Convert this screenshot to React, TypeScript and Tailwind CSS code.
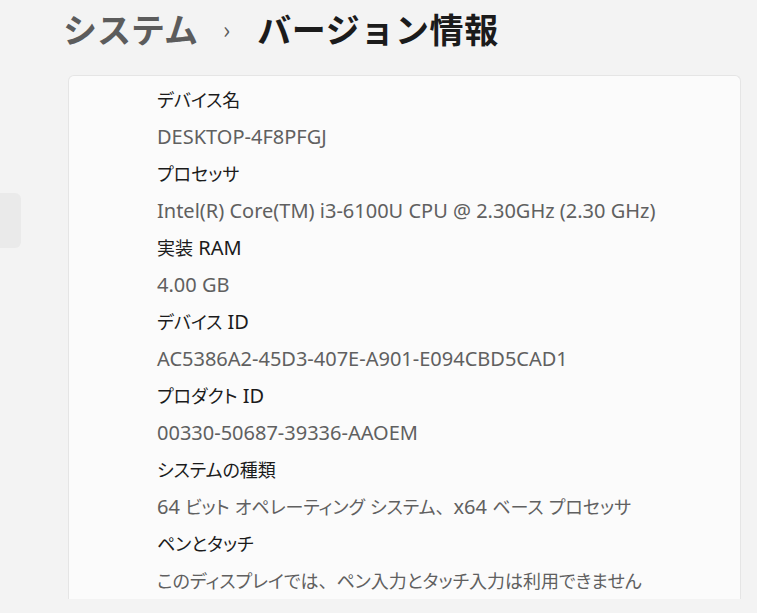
const rows: [string, string][] = [
  ["デバイス名", "DESKTOP-4F8PFGJ"],
  ["プロセッサ", "Intel(R) Core(TM) i3-6100U CPU @ 2.30GHz (2.30 GHz)"],
  ["実装 RAM", "4.00 GB"],
  ["デバイス ID", "AC5386A2-45D3-407E-A901-E094CBD5CAD1"],
  ["プロダクト ID", "00330-50687-39336-AAOEM"],
  ["システムの種類", "64 ビット オペレーティング システム、x64 ベース プロセッサ"],
  ["ペンとタッチ", "このディスプレイでは、ペン入力とタッチ入力は利用できません"],
];

// Japanese runs use proportional kana and sit a little smaller than the Latin text;
// the ideographic comma keeps its full width
const cjk = /[\u3000-\u30ff\u4e00-\u9fff\uff00-\uffef]/;

type Run = { kind: "latin" | "jp" | "comma"; s: string };

function Mixed({ text }: { text: string }) {
  const runs: Run[] = [];
  for (const ch of text) {
    const kind: Run["kind"] = ch === "、" ? "comma" : cjk.test(ch) ? "jp" : "latin";
    const last = runs[runs.length - 1];
    if (last && last.kind === kind && kind !== "comma") last.s += ch;
    else runs.push({ kind, s: ch });
  }
  return (
    <>
      {runs.map((r, i) =>
        r.kind === "latin" ? (
          <span key={i}>{r.s}</span>
        ) : (
          <span
            key={i}
            className="text-[18px]"
            style={{
              fontFamily: '"Noto Sans CJK JP", sans-serif',
              fontFeatureSettings: r.kind === "jp" ? '"palt"' : "normal",
            }}
          >
            {r.s}
          </span>
        )
      )}
    </>
  );
}

export default function App() {
  return (
    <div
      className="relative h-[613px] w-[757px] overflow-hidden bg-[#f3f3f3]"
      style={{ fontFamily: '"Noto Sans", "Noto Sans CJK JP", sans-serif' }}
    >
      {/* selected nav item peeking from the sidebar */}
      <div className="absolute left-[-10px] top-[193px] h-[55px] w-[31px] rounded-md bg-[#eaeaea]" />

      <h1
        className="flex items-center pl-[63px] pt-[1px] text-[34px] font-semibold leading-[56px]"
        style={{ fontFamily: '"Noto Sans CJK JP", sans-serif' }}
      >
        <span className="text-[#5c5c5c]">システム</span>
        <span className="ml-[25px] mr-[27px] text-[24px] font-normal text-[#5c5c5c]">›</span>
        <span className="tracking-[0.6px] text-[#1b1b1b]">バージョン情報</span>
      </h1>

      <div className="ml-[68px] mt-[18px] w-[673px] rounded-t-md border border-b-0 border-[#e5e5e5] bg-[#fbfbfb] pl-[88px] pt-[5px]">
        {rows.map(([label, value]) => (
          <div key={label}>
            <div className="h-[37px] text-[20px] leading-[37px] text-[#1b1b1b]">
              <Mixed text={label} />
            </div>
            <div className="h-[37px] text-[20px] leading-[37px] text-[#606060]">
              <Mixed text={value} />
            </div>
          </div>
        ))}
      </div>
    </div>
  );
}
